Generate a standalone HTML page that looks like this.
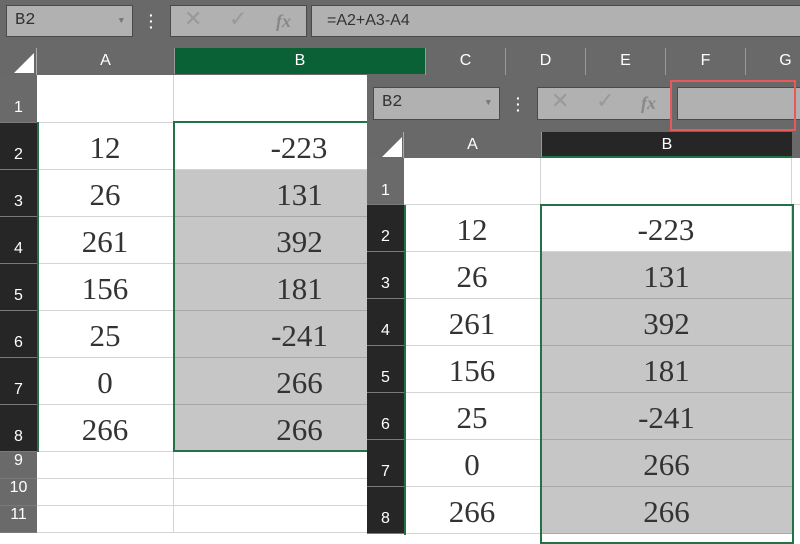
<!DOCTYPE html><html><head><style>
*{margin:0;padding:0;box-sizing:border-box}
body{width:800px;height:533px;overflow:hidden;background:#fff;position:relative;font-family:"Liberation Sans",sans-serif}
div{position:absolute}
.bar{background:#696969}
.nb{background:#b1b1b1;border:1px solid #4a4a4a;color:#333;font-size:17px;line-height:30px;padding-left:8px;font-family:"Liberation Mono",monospace}
.hdr{color:#fff;font-size:16px;text-align:center;line-height:26px}
.rh{color:#fff;font-size:16px;text-align:center;background:#262626;border-bottom:1px solid #7a7a7a}
.rhl{background:#6a6a6a}
.c{border-right:1px solid #d4d4d4;border-bottom:1px solid #d4d4d4;font-family:"Liberation Serif",serif;font-size:31px;color:#333;text-align:center}
.sel{background:#c6c6c6;border-bottom-color:#a8a8a8;border-right:none}
</style></head><body>
<div class="bar" style="left:0;top:0;width:800px;height:75px"></div>
<div class="nb" style="left:6px;top:5px;width:127px;height:32px">B2<span style="position:absolute;right:8px;top:0;font-size:9px;color:#777">▼</span></div>
<div style="left:149px;top:12px;width:4px;height:18px;color:#fff;font-size:14px;line-height:6px;font-weight:bold">·<br>·<br>·</div>
<div class="nb" style="left:170px;top:5px;width:137px;height:32px;padding:0">
<span style="position:absolute;left:13px;top:0;color:#999;font-size:22px">✕</span>
<span style="position:absolute;left:58px;top:0;color:#999;font-size:22px">✓</span>
<span style="position:absolute;left:105px;top:0;color:#888;font-style:italic;font-family:'Liberation Serif',serif;font-size:18px;font-weight:bold">fx</span></div>
<div class="nb" style="left:311px;top:5px;width:500px;height:32px;padding-left:15px;font-family:'Liberation Sans',sans-serif;font-size:16px">=A2+A3-A4</div>
<div style="left:0;top:48px;width:37px;height:27px;border-right:1px solid #aaa"><div style="left:14px;top:5px;width:0;height:0;border-left:20px solid transparent;border-bottom:20px solid #fff"></div></div>
<div class="hdr" style="left:37px;top:48px;width:137px;height:27px">A</div>
<div class="hdr" style="left:174px;top:48px;width:251px;height:26px;background:#0b6136;border-left:1px solid #999">B</div>
<div class="hdr" style="left:425px;top:48px;width:80px;height:27px;border-left:1px solid #999">C</div>
<div class="hdr" style="left:505px;top:48px;width:80px;height:27px;border-left:1px solid #999">D</div>
<div class="hdr" style="left:585px;top:48px;width:80px;height:27px;border-left:1px solid #999">E</div>
<div class="hdr" style="left:665px;top:48px;width:80px;height:27px;border-left:1px solid #999">F</div>
<div class="hdr" style="left:745px;top:48px;width:80px;height:27px;border-left:1px solid #999">G</div>
<div class="rh rhl" style="left:0;top:75px;width:37px;height:48px;padding-top:24px">1</div>
<div class="c" style="left:37px;top:75px;width:137px;height:48px"></div>
<div class="c" style="left:174px;top:75px;width:251px;height:48px"></div>
<div class="rh" style="left:0;top:123px;width:37px;height:47px;padding-top:23px">2</div>
<div class="rh" style="left:0;top:170px;width:37px;height:47px;padding-top:23px">3</div>
<div class="rh" style="left:0;top:217px;width:37px;height:47px;padding-top:23px">4</div>
<div class="rh" style="left:0;top:264px;width:37px;height:47px;padding-top:23px">5</div>
<div class="rh" style="left:0;top:311px;width:37px;height:47px;padding-top:23px">6</div>
<div class="rh" style="left:0;top:358px;width:37px;height:47px;padding-top:23px">7</div>
<div class="rh" style="left:0;top:405px;width:37px;height:47px;padding-top:23px">8</div>
<div class="c" style="left:37px;top:123px;width:137px;height:47px;line-height:50px">12</div>
<div class="c" style="left:37px;top:170px;width:137px;height:47px;line-height:50px">26</div>
<div class="c" style="left:37px;top:217px;width:137px;height:47px;line-height:50px">261</div>
<div class="c" style="left:37px;top:264px;width:137px;height:47px;line-height:50px">156</div>
<div class="c" style="left:37px;top:311px;width:137px;height:47px;line-height:50px">25</div>
<div class="c" style="left:37px;top:358px;width:137px;height:47px;line-height:50px">0</div>
<div class="c" style="left:37px;top:405px;width:137px;height:47px;line-height:50px">266</div>
<div class="c" style="left:174px;top:123px;width:251px;height:47px;line-height:50px">-223</div>
<div class="c sel" style="left:174px;top:170px;width:251px;height:47px;line-height:50px">131</div>
<div class="c sel" style="left:174px;top:217px;width:251px;height:47px;line-height:50px">392</div>
<div class="c sel" style="left:174px;top:264px;width:251px;height:47px;line-height:50px">181</div>
<div class="c sel" style="left:174px;top:311px;width:251px;height:47px;line-height:50px">-241</div>
<div class="c sel" style="left:174px;top:358px;width:251px;height:47px;line-height:50px">266</div>
<div class="c sel" style="left:174px;top:405px;width:251px;height:47px;line-height:50px">266</div>
<div style="left:37px;top:122px;width:2px;height:330px;background:#217346"></div>
<div style="left:173px;top:121px;width:260px;height:331px;border:2px solid #217346"></div>
<div class="rh rhl" style="left:0;top:452px;width:37px;height:27px">9</div>
<div class="rh rhl" style="left:0;top:479px;width:37px;height:27px">10</div>
<div class="rh rhl" style="left:0;top:506px;width:37px;height:27px">11</div>
<div class="c" style="left:37px;top:452px;width:137px;height:27px"></div>
<div class="c" style="left:37px;top:479px;width:137px;height:27px"></div>
<div class="c" style="left:37px;top:506px;width:137px;height:27px"></div>
<div class="c" style="left:174px;top:452px;width:251px;height:27px"></div>
<div class="c" style="left:174px;top:479px;width:251px;height:27px"></div>
<div class="c" style="left:174px;top:506px;width:251px;height:27px"></div>

<div style="left:367px;top:75px;width:433px;height:460px;background:#fff"></div>
<div class="bar" style="left:367px;top:75px;width:433px;height:83px"></div>
<div class="nb" style="left:373px;top:87px;width:127px;height:33px">B2<span style="position:absolute;right:8px;top:0;font-size:9px;color:#777">▼</span></div>
<div style="left:516px;top:95px;width:4px;height:18px;color:#fff;font-size:14px;line-height:6px;font-weight:bold">·<br>·<br>·</div>
<div class="nb" style="left:537px;top:87px;width:135px;height:33px;padding:0">
<span style="position:absolute;left:13px;top:0;color:#999;font-size:22px">✕</span>
<span style="position:absolute;left:58px;top:0;color:#999;font-size:22px">✓</span>
<span style="position:absolute;left:103px;top:0;color:#888;font-style:italic;font-family:'Liberation Serif',serif;font-size:18px;font-weight:bold">fx</span></div>
<div class="nb" style="left:677px;top:87px;width:130px;height:33px"></div>
<div style="left:670px;top:80px;width:126px;height:51px;border:2px solid #e85a5a"></div>
<div style="left:367px;top:132px;width:37px;height:26px;border-right:1px solid #aaa"><div style="left:15px;top:5px;width:0;height:0;border-left:20px solid transparent;border-bottom:20px solid #fff"></div></div>
<div class="hdr" style="left:404px;top:132px;width:137px;height:26px">A</div>
<div class="hdr" style="left:541px;top:132px;width:251px;height:26px;background:#262626;border-bottom:2px solid #217346;border-left:1px solid #999">B</div>
<div class="rh rhl" style="left:367px;top:158px;width:37px;height:47px;padding-top:24px">1</div>
<div class="c" style="left:404px;top:158px;width:137px;height:47px"></div>
<div class="c" style="left:541px;top:158px;width:251px;height:47px"></div>
<div class="c" style="left:792px;top:158px;width:20px;height:47px"></div>
<div class="rh" style="left:367px;top:205px;width:37px;height:47px;padding-top:23px">2</div>
<div class="rh" style="left:367px;top:252px;width:37px;height:47px;padding-top:23px">3</div>
<div class="rh" style="left:367px;top:299px;width:37px;height:47px;padding-top:23px">4</div>
<div class="rh" style="left:367px;top:346px;width:37px;height:47px;padding-top:23px">5</div>
<div class="rh" style="left:367px;top:393px;width:37px;height:47px;padding-top:23px">6</div>
<div class="rh" style="left:367px;top:440px;width:37px;height:47px;padding-top:23px">7</div>
<div class="rh" style="left:367px;top:487px;width:37px;height:47px;padding-top:23px">8</div>
<div class="c" style="left:404px;top:205px;width:137px;height:47px;line-height:50px">12</div>
<div class="c" style="left:404px;top:252px;width:137px;height:47px;line-height:50px">26</div>
<div class="c" style="left:404px;top:299px;width:137px;height:47px;line-height:50px">261</div>
<div class="c" style="left:404px;top:346px;width:137px;height:47px;line-height:50px">156</div>
<div class="c" style="left:404px;top:393px;width:137px;height:47px;line-height:50px">25</div>
<div class="c" style="left:404px;top:440px;width:137px;height:47px;line-height:50px">0</div>
<div class="c" style="left:404px;top:487px;width:137px;height:47px;line-height:50px">266</div>
<div class="c" style="left:541px;top:205px;width:251px;height:47px;line-height:50px">-223</div>
<div class="c sel" style="left:541px;top:252px;width:251px;height:47px;line-height:50px">131</div>
<div class="c sel" style="left:541px;top:299px;width:251px;height:47px;line-height:50px">392</div>
<div class="c sel" style="left:541px;top:346px;width:251px;height:47px;line-height:50px">181</div>
<div class="c sel" style="left:541px;top:393px;width:251px;height:47px;line-height:50px">-241</div>
<div class="c sel" style="left:541px;top:440px;width:251px;height:47px;line-height:50px">266</div>
<div class="c sel" style="left:541px;top:487px;width:251px;height:47px;line-height:50px">266</div>
<div style="left:404px;top:205px;width:2px;height:330px;background:#217346"></div>
<div style="left:540px;top:204px;width:254px;height:340px;border:2px solid #217346"></div>
</body></html>
